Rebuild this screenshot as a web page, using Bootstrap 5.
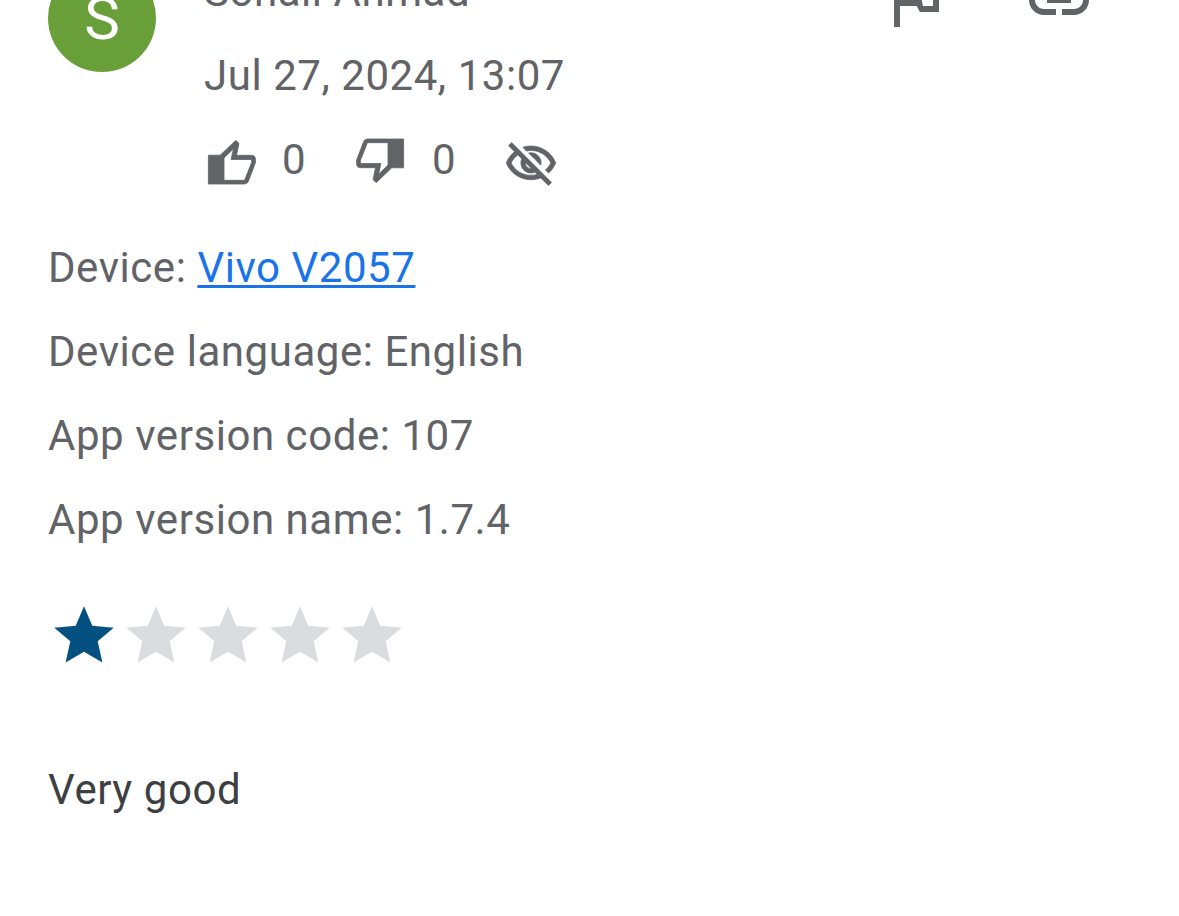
<!DOCTYPE html>
<html lang="en">
<head>
    <meta charset="UTF-8">
    <meta name="viewport" content="width=device-width, initial-scale=1.0">
    <link href="https://cdn.jsdelivr.net/npm/bootstrap@5.3.3/dist/css/bootstrap.min.css" rel="stylesheet">
    <script src="https://cdn.jsdelivr.net/npm/bootstrap@5.3.3/dist/js/bootstrap.bundle.min.js"></script>
    <title>Review</title>
    <style>
        body{
            font-family: Roboto, sans-serif;
            font-size: 42px;
            line-height: 60px;
            letter-spacing: 0.55px;
            color: #616367;
            background-color: #fff;
            height: 100vh;
            overflow: hidden;
        }
        svg{
            display: block;
            fill: currentColor;
            flex: none;
            overflow: visible;
        }
        .review{
            margin-top: -38px;
            padding: 0 48px;
        }
        .avatar{
            width: 108px;
            height: 108px;
            margin: 2px 48px 0 0;
            padding-top: 2px;
            background-color: #689f38;
            color: #fff;
            font-size: 60px;
            letter-spacing: 0;
        }
        .lines{
            gap: 24px;
        }
        .actions{
            gap: 72px;
            padding: 2px 36px 0 0;
        }
        .votes{
            height: 60px;
            padding-left: 4px;
        }
        .votes svg{
            margin-top: 4px;
        }
        .votes .down{
            margin-top: 2px;
            transform: rotate(180deg);
        }
        .votes .hide-icon{
            margin-top: 7px;
            stroke: currentColor;
            stroke-width: 0.3;
        }
        .vote-count{
            width: 24px;
            margin: 0 50px 0 26px;
        }
        .down + .vote-count{
            margin: 0 48px 0 28px;
        }
        .details{
            margin-top: 48px;
        }
        .details a{
            color: #1a73e8;
            text-decoration-thickness: 3px;
            text-underline-offset: 3px;
        }
        .stars{
            margin-top: 50px;
            color: #dadce0;
        }
        .stars .on{
            color: #045080;
        }
        .comment{
            margin-top: 88px;
            color: #3c4043;
        }
    </style>
</head>
<body>
    <svg width="0" height="0" class="position-absolute">
        <symbol id="thumb" viewBox="0 0 48 44" overflow="visible">
            <path fill-rule="evenodd" stroke="currentColor" stroke-width="0.8" d="M0.4 15.2H12.2L27.7 0.4L30.2 2.5Q31 3.2 30.8 4.3L28.5 15.3H43.3Q47.5 15.3 47.5 19.7V21.8Q47.5 22.8 47.1 23.7L40.4 41.2Q39.4 44 36.5 44H0.4ZM16 18V40.3H36.6L43.6 22.5V19.5H23.1L25.4 8.8Z"/>
        </symbol>
        <symbol id="star" viewBox="0 0 72 72">
            <path d="M36 6.3L44.3 25.8L65.7 27.7L49.7 41.2L54.4 62.4L36 51.7L17.6 62.4L22.3 41.2L6.3 27.7L27.7 25.8Z"/>
        </symbol>
    </svg>
    <main class="review">
        <header class="d-flex align-items-start">
            <div class="avatar rounded-circle d-flex align-items-center justify-content-center flex-shrink-0">S</div>
            <div class="lines d-flex flex-column flex-grow-1">
                <div>Sohail Ahmad</div>
                <div>Jul 27, 2024, 13:07</div>
                <div class="votes d-flex align-items-center">
                    <svg width="48" height="44"><use href="#thumb"/></svg>
                    <span class="vote-count">0</span>
                    <svg class="down" width="48" height="44"><use href="#thumb"/></svg>
                    <span class="vote-count">0</span>
                    <svg class="hide-icon" width="54" height="54" viewBox="0 0 24 24"><path d="M12 6c3.79 0 7.17 2.13 8.82 5.5-.59 1.22-1.42 2.27-2.41 3.12l1.41 1.41c1.39-1.23 2.49-2.77 3.18-4.53C21.27 7.11 17 4 12 4c-1.27 0-2.49.2-3.64.57l1.65 1.65C10.66 6.09 11.32 6 12 6zm-1.07 1.14L13 9.21c.57.25 1.03.71 1.28 1.28l2.07 2.07c.08-.34.14-.7.14-1.07C16.5 9.01 14.48 7 12 7c-.37 0-.72.05-1.07.14zM2.01 3.87l2.68 2.68C3.06 7.83 1.77 9.53 1 11.5 2.73 15.89 7 19 12 19c1.52 0 2.98-.29 4.32-.82l3.42 3.42 1.41-1.41L3.42 2.45 2.01 3.87zm7.5 7.5l2.61 2.61c-.04.01-.08.02-.12.02-1.38 0-2.5-1.12-2.5-2.5 0-.05.01-.08.01-.13zm-3.4-3.4l1.75 1.75c-.23.55-.36 1.15-.36 1.78 0 2.48 2.02 4.5 4.5 4.5.63 0 1.23-.13 1.77-.36l.98.98c-.88.24-1.8.38-2.75.38-3.79 0-7.17-2.13-8.82-5.5.7-1.43 1.72-2.61 2.93-3.53z"/></svg>
                </div>
            </div>
            <div class="actions d-flex">
                <svg width="72" height="72" viewBox="0 0 24 24"><path d="M12.36 6l.4 2H18v6h-3.36l-.4-2H7V6h5.36M14 4H5v17h2v-7h5.6l1 2h6.4V6h-5.6L14 4z"/></svg>
                <svg width="72" height="72" viewBox="0 0 24 24"><path d="M4 12c0-1.66 1.34-3 3-3h4V7H7c-2.76 0-5 2.24-5 5s2.24 5 5 5h4v-2H7c-1.66 0-3-1.34-3-3zM8 13h8v-2H8v2zm9-6h-4v2h4c1.66 0 3 1.34 3 3s-1.34 3-3 3h-4v2h4c2.76 0 5-2.24 5-5s-2.24-5-5-5z"/></svg>
            </div>
        </header>
        <section class="details lines d-flex flex-column">
            <div>Device: <a href="#">Vivo V2057</a></div>
            <div>Device language: English</div>
            <div>App version code: 107</div>
            <div>App version name: 1.7.4</div>
        </section>
        <div class="stars d-flex">
            <svg class="on" width="72" height="72"><use href="#star"/></svg>
            <svg width="72" height="72"><use href="#star"/></svg>
            <svg width="72" height="72"><use href="#star"/></svg>
            <svg width="72" height="72"><use href="#star"/></svg>
            <svg width="72" height="72"><use href="#star"/></svg>
        </div>
        <p class="comment mb-0">Very good</p>
    </main>
</body>
</html>
